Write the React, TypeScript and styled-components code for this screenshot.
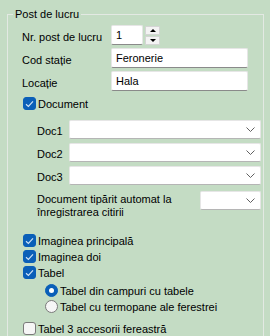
import React from 'react';
import styled, { createGlobalStyle } from 'styled-components';

const GlobalStyle = createGlobalStyle`
  html, body {
    margin: 0;
    padding: 0;
    background: #c4dcc4;
  }
  body {
    font-family: 'Liberation Sans', Arial, sans-serif;
    font-size: 11px;
    color: #000;
  }
`;

const Page = styled.div`
  width: 270px;
  height: 336px;
  padding-top: 7px;
  box-sizing: border-box;
  overflow: hidden;
`;

const Group = styled.fieldset`
  margin: 0 0 0 7px;
  width: 257px;
  min-inline-size: 0;
  box-sizing: border-box;
  border: 1px solid #e3e9e3;
  padding: 0 0 20px 0;
`;

const Legend = styled.legend`
  margin-left: 5px;
  padding: 0 2px;
  font-size: 11px;
  line-height: 14px;
`;

const Body = styled.div`
  display: flex;
  flex-direction: column;
  padding: 4px 2px 0 14px;
`;

const FieldGrid = styled.div`
  display: grid;
  grid-template-columns: 89px auto;
  row-gap: 3px;
  align-items: center;
`;

const Label = styled.span<{ $drop?: number }>`
  padding-top: ${(p) => p.$drop ?? 4}px;
  white-space: nowrap;
`;

const boxLook = `
  box-sizing: border-box;
  height: 20px;
  background: #fff;
  border: 1px solid #e6e6e6;
  border-bottom: 1px solid #8a8a8a;
  border-radius: 2px;
  display: flex;
  align-items: center;
  padding: 0 4px;
`;

const TextBox = styled.div<{ $w: number }>`
  ${boxLook}
  width: ${(p) => p.$w}px;
`;

const SpinWrap = styled.div`
  display: flex;
  align-items: center;
  gap: 2px;
`;

const SpinButtons = styled.div`
  display: flex;
  flex-direction: column;
  gap: 1px;
`;

const SpinButton = styled.div`
  width: 15px;
  height: 9px;
  box-sizing: border-box;
  background: #f3f3f3;
  border: 1px solid #d4d4d4;
  border-radius: 1px;
  display: flex;
  align-items: center;
  justify-content: center;
`;

const Arrow = styled.span<{ $down?: boolean }>`
  width: 0;
  height: 0;
  border-left: 3px solid transparent;
  border-right: 3px solid transparent;
  ${(p) =>
    p.$down ? 'border-top: 3px solid #000;' : 'border-bottom: 3px solid #000;'}
`;

const ComboBox = styled.div<{ $w: number }>`
  ${boxLook}
  height: 19px;
  width: ${(p) => p.$w}px;
  border-bottom-color: #b5b5b5;
  justify-content: flex-end;
  padding-right: 5px;
`;

const DocGrid = styled.div`
  display: grid;
  grid-template-columns: 32px auto;
  row-gap: 4px;
  align-items: center;
  margin: 10px 0 0 15px;
`;

const PrintRow = styled.div`
  display: flex;
  justify-content: space-between;
  align-items: flex-start;
  margin: 6px 0 0 15px;
`;

const PrintLabel = styled.span`
  line-height: 13px;
  padding-top: 2px;
`;

const CheckRow = styled.label<{ $top: number; $indent?: number }>`
  display: flex;
  align-items: center;
  gap: 2px;
  height: 13px;
  margin-top: ${(p) => p.$top}px;
  margin-left: ${(p) => p.$indent ?? 1}px;
  white-space: nowrap;
`;

const CheckBox = styled.span<{ $on?: boolean }>`
  width: 13px;
  height: 13px;
  box-sizing: border-box;
  border-radius: 3px;
  flex: none;
  display: flex;
  align-items: center;
  justify-content: center;
  background: ${(p) => (p.$on ? '#0a5fb8' : '#f6f6f6')};
  border: 1px solid ${(p) => (p.$on ? '#0a5fb8' : '#7a7a7a')};
`;

const Radio = styled.span<{ $on?: boolean }>`
  width: 13px;
  height: 13px;
  box-sizing: border-box;
  border-radius: 50%;
  flex: none;
  display: flex;
  align-items: center;
  justify-content: center;
  background: ${(p) => (p.$on ? '#0a5fb8' : '#f6f6f6')};
  border: 1px solid ${(p) => (p.$on ? '#0a5fb8' : '#7a7a7a')};
`;

const Dot = styled.span`
  width: 5px;
  height: 5px;
  border-radius: 50%;
  background: #fff;
`;

const Chevron = () => (
  <svg width="9" height="5" viewBox="0 0 9 5">
    <polyline points="0.5,0.5 4.5,4.5 8.5,0.5" fill="none" stroke="#606060" strokeWidth="1" />
  </svg>
);

const Tick = () => (
  <svg width="9" height="8" viewBox="0 0 9 8">
    <polyline points="1,4.2 3.4,6.4 8,1.4" fill="none" stroke="#cfe2f7" strokeWidth="1.2" />
  </svg>
);

const Check = ({ on, label, top, indent }: { on?: boolean; label: string; top: number; indent?: number }) => (
  <CheckRow $top={top} $indent={indent}>
    <CheckBox $on={on}>{on && <Tick />}</CheckBox>
    {label}
  </CheckRow>
);

const Option = ({ on, label, top }: { on?: boolean; label: string; top: number }) => (
  <CheckRow $top={top} $indent={23}>
    <Radio $on={on}>{on && <Dot />}</Radio>
    {label}
  </CheckRow>
);

const docs = ['Doc1', 'Doc2', 'Doc3'];

export default function App() {
  return (
    <Page>
      <GlobalStyle />
      <Group>
        <Legend>Post de lucru</Legend>
        <Body>
          <FieldGrid>
            <Label>Nr. post de lucru</Label>
            <SpinWrap>
              <TextBox $w={32}>1</TextBox>
              <SpinButtons>
                <SpinButton>
                  <Arrow />
                </SpinButton>
                <SpinButton>
                  <Arrow $down />
                </SpinButton>
              </SpinButtons>
            </SpinWrap>
            <Label>Cod stație</Label>
            <TextBox $w={137}>Feronerie</TextBox>
            <Label>Locație</Label>
            <TextBox $w={137}>Hala</TextBox>
          </FieldGrid>

          <Check on label="Document" top={6} />

          <DocGrid>
            {docs.map((d) => (
              <React.Fragment key={d}>
                <Label $drop={3}>{d}</Label>
                <ComboBox $w={192}>
                  <Chevron />
                </ComboBox>
              </React.Fragment>
            ))}
          </DocGrid>

          <PrintRow>
            <PrintLabel>
              Document tipărit automat la
              <br />
              înregistrarea citirii
            </PrintLabel>
            <ComboBox $w={61}>
              <Chevron />
            </ComboBox>
          </PrintRow>

          <Check on label="Imaginea principală" top={15} />
          <Check on label="Imaginea doi" top={3} />
          <Check on label="Tabel" top={3} />
          <Option on label="Tabel din campuri cu tabele" top={5} />
          <Option label="Tabel cu termopane ale ferestrei" top={3} />
          <Check label="Tabel 3 accesorii fereastră" top={9} />
        </Body>
      </Group>
    </Page>
  );
}
